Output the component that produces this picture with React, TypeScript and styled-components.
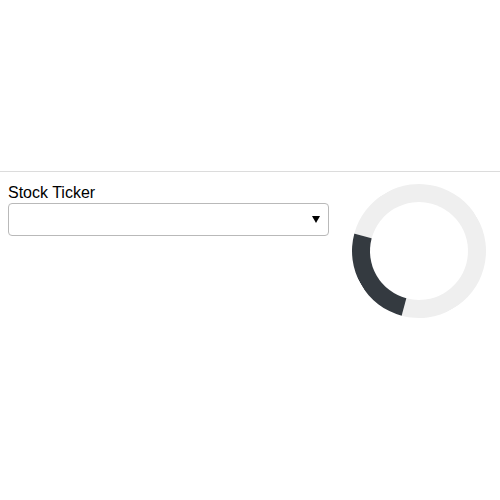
import styled, { createGlobalStyle } from "styled-components";

const GlobalStyle = createGlobalStyle`
  body {
    margin: 0;
    background: #fff;
    font-family: "Liberation Sans", Arial, sans-serif;
    color: #000;
  }
`;

export default function App() {
  return (
    <>
      <GlobalStyle />
      <TopBar />
      <Content>
        <Field>
          <Label htmlFor="ticker">Stock Ticker</Label>
          <SelectWrap>
            <Select id="ticker" defaultValue="">
              <option value=""></option>
            </Select>
            <Arrow />
          </SelectWrap>
        </Field>
        <Spinner />
      </Content>
    </>
  );
}

const TopBar = styled.div`
  height: 171px;
  border-bottom: 1px solid #dcdcdc;
`;

const Content = styled.div`
  display: flex;
  align-items: flex-start;
  gap: 23px;
  padding: 11px 14px 0 8px;
`;

const Field = styled.div`
  display: flex;
  flex-direction: column;
  width: 321px;
`;

const Label = styled.label`
  font-size: 16px;
  line-height: 20px;
`;

const SelectWrap = styled.div`
  position: relative;
`;

const Select = styled.select`
  appearance: none;
  width: 100%;
  height: 33px;
  box-sizing: border-box;
  border: 1px solid #b9b9b9;
  border-radius: 4px;
  background: #fff;
  font-family: inherit;
  font-size: 14px;
  padding: 0 30px 0 8px;
  outline: none;
`;

const Arrow = styled.span`
  position: absolute;
  right: 9px;
  top: 13px;
  width: 0;
  height: 0;
  border-left: 4px solid transparent;
  border-right: 4px solid transparent;
  border-top: 7px solid #000;
  pointer-events: none;
`;

const Spinner = styled.div`
  flex: none;
  width: 134px;
  height: 134px;
  margin-top: 1px;
  box-sizing: border-box;
  border-radius: 50%;
  border: 18px solid #efefef;
  border-left-color: #343a40;
  transform: rotate(-30deg);
`;
